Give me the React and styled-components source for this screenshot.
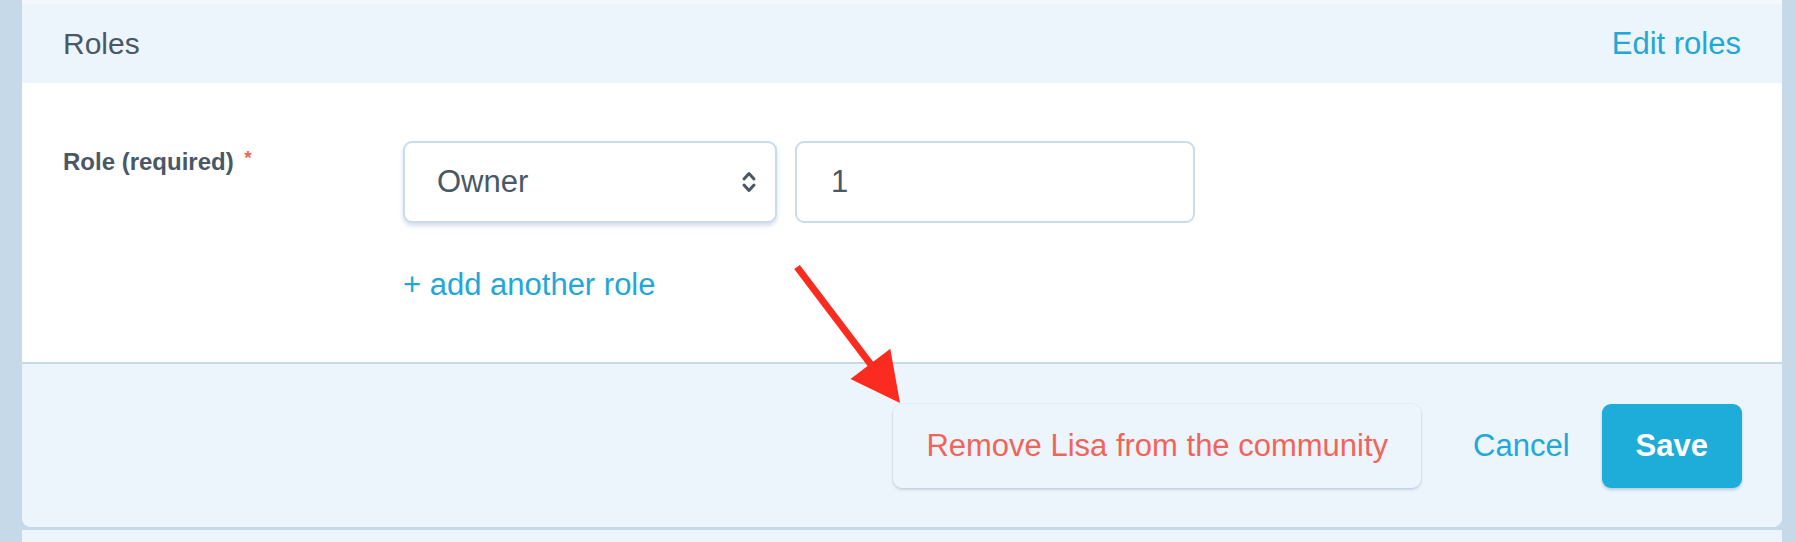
import React from "react";
import styled, { createGlobalStyle } from "styled-components";

//Colours
const ink = "#4a5866";
const blue = "#22a7d8";
const red = "#f1645a";
const tint = "#edf5fc";
const frame = "#c5d9e8";

const GlobalStyle = createGlobalStyle`
  html, body {
    margin: 0;
    padding: 0;
    background: ${frame};
  }
  body {
    font-family: "Liberation Sans", Arial, sans-serif;
    color: ${ink};
  }
`;

const Page = () => {
  return (
    <StyledPage>
      <GlobalStyle />
      <TopEdge />
      <Card>
        <Header>
          <Title>Roles</Title>
          <TextLink href="#">Edit roles</TextLink>
        </Header>
        <Body>
          <Label>
            Role (required) <Required>*</Required>
          </Label>
          <Fields>
            <FieldRow>
              <SelectBox>
                <span>Owner</span>
                <svg width="16" height="26" viewBox="0 0 16 26" fill="none">
                  <path
                    d="M3 10 L8 4.5 L13 10 M3 16 L8 21.5 L13 16"
                    stroke={ink}
                    strokeWidth="3"
                    strokeLinecap="round"
                    strokeLinejoin="round"
                  />
                </svg>
              </SelectBox>
              <NumberInput type="text" defaultValue="1" />
            </FieldRow>
            <AddLink href="#">+ add another role</AddLink>
          </Fields>
        </Body>
        <Footer>
          <RemoveButton type="button">Remove Lisa from the community</RemoveButton>
          <CancelButton type="button">Cancel</CancelButton>
          <SaveButton type="button">Save</SaveButton>
        </Footer>
      </Card>
      <NextCard />
      <Annotation width="1796" height="542" viewBox="0 0 1796 542">
        <polygon
          points="799.8,264.9 873.2,361.8 890.3,348.8 900,403 850.5,379 867.6,366 794.2,269.1"
          fill="#fc2b1f"
        />
      </Annotation>
    </StyledPage>
  );
};

const StyledPage = styled.div`
  position: relative;
  width: 1796px;
  height: 542px;
  overflow: hidden;
  padding: 0 14px 0 22px;
  box-sizing: border-box;
`;

const TopEdge = styled.div`
  height: 4px;
  background: #f4f8fc;
`;

const Card = styled.div`
  background: #ffffff;
  border-radius: 0 0 9px 9px;
  overflow: hidden;
`;

const Header = styled.div`
  height: 79px;
  padding: 0 41px;
  background: ${tint};
  display: flex;
  align-items: center;
  justify-content: space-between;
`;

const Title = styled.h2`
  margin: 0;
  font-size: 30px;
  font-weight: 400;
  color: ${ink};
`;

const TextLink = styled.a`
  font-size: 31px;
  color: ${blue};
  text-decoration: none;
`;

const Body = styled.div`
  display: grid;
  grid-template-columns: 340px 1fr;
  padding: 58px 41px 58px;
  height: 279px;
  box-sizing: border-box;
`;

const Label = styled.div`
  padding-top: 6px;
  font-size: 24px;
  line-height: 1.2;
  font-weight: 700;
  color: ${ink};
`;

const Required = styled.sup`
  color: ${red};
  font-size: 19px;
  font-weight: 700;
  margin-left: 4px;
  vertical-align: 6px;
`;

const Fields = styled.div`
  display: flex;
  flex-direction: column;
  align-items: flex-start;
  gap: 43px;
`;

const FieldRow = styled.div`
  display: flex;
  gap: 18px;
`;

const SelectBox = styled.div`
  width: 374px;
  height: 82px;
  box-sizing: border-box;
  padding: 0 18px 0 32px;
  display: flex;
  align-items: center;
  justify-content: space-between;
  border: 2px solid #cadcea;
  border-radius: 9px;
  background: #fff;
  box-shadow: 0 3px 4px rgba(70, 110, 150, 0.22);
  font-size: 31px;
  color: ${ink};
`;

const NumberInput = styled.input`
  width: 400px;
  height: 82px;
  box-sizing: border-box;
  padding: 0 34px;
  border: 2px solid #cadcea;
  border-radius: 9px;
  outline: none;
  background: #fff;
  font-family: "Liberation Sans", Arial, sans-serif;
  font-size: 31px;
  color: ${ink};
`;

const AddLink = styled.a`
  font-size: 31px;
  line-height: 1.2;
  color: ${blue};
  text-decoration: none;
`;

const Footer = styled.div`
  height: 165px;
  box-sizing: border-box;
  border-top: 2px solid ${frame};
  background: ${tint};
  padding: 0 40px;
  display: flex;
  align-items: center;
  justify-content: flex-end;

  button {
    height: 84px;
    border: none;
    font-family: "Liberation Sans", Arial, sans-serif;
    font-size: 31px;
    cursor: pointer;
  }
`;

const RemoveButton = styled.button`
  padding: 0 33px;
  background: #ecf5fc;
  color: ${red};
  border-radius: 9px;
  box-shadow: 0 2px 3px rgba(70, 110, 150, 0.22), 0 0 0 1px #e2edf6;
`;

const CancelButton = styled.button`
  margin: 0 32px 0 52px;
  padding: 0;
  background: transparent;
  color: ${blue};
`;

const SaveButton = styled.button`
  padding: 0 34px;
  background: #1eacd9;
  color: #fff;
  font-weight: 700;
  border-radius: 9px;
  box-shadow: 0 2px 3px rgba(30, 90, 130, 0.25);
`;

const NextCard = styled.div`
  margin-top: 3px;
  height: 20px;
  background: ${tint};
`;

const Annotation = styled.svg`
  position: absolute;
  top: 0;
  left: 0;
  pointer-events: none;
`;

export default function App() {
  return <Page />;
}
